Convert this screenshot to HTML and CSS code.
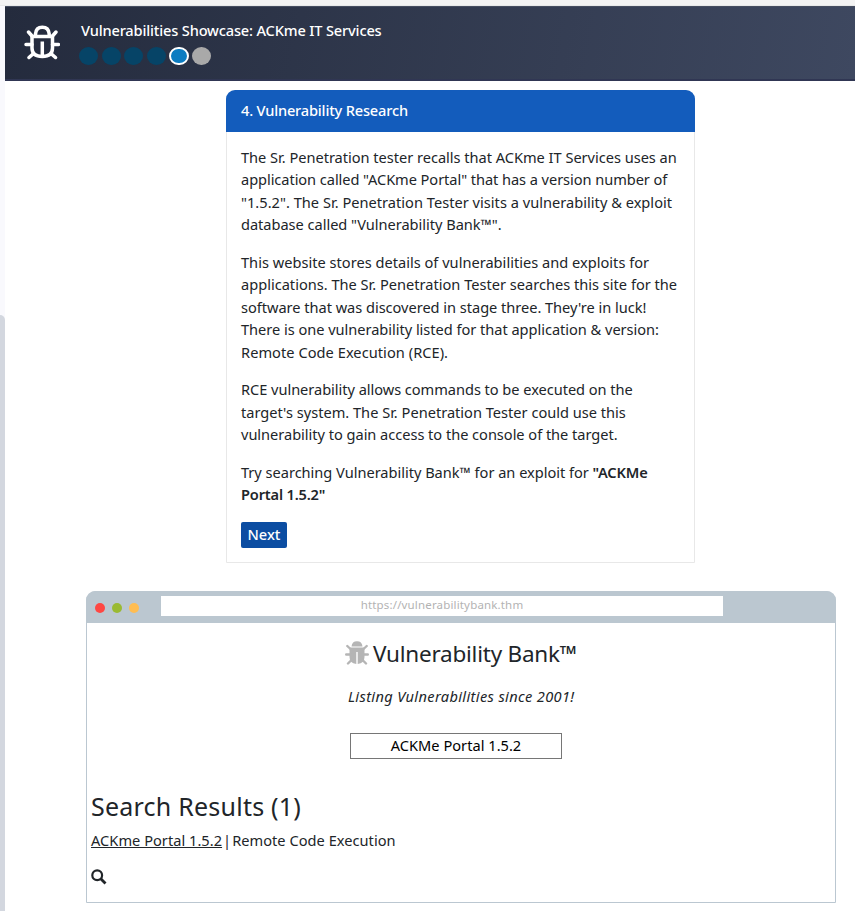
FILE: index.html
```html
<!DOCTYPE html>
<html lang="en">
<head>
<meta charset="utf-8">
<title>Vulnerabilities Showcase</title>
<link rel="stylesheet" href="styles.css">
</head>
<body>
<aside class="rail"><div class="thumb"></div></aside>
<div class="page">
  <header class="top">
    <svg class="logo" viewBox="0 0 36 36" fill="none" stroke="#fff" stroke-width="3.500" stroke-linecap="round" stroke-linejoin="round">
      <path d="M8 12.500H28.500V24Q28.500 32.500 18.300 32.500Q8 32.500 8 24Z"/>
      <path d="M11.500 12V10Q12 3.200 18.300 3.200Q24.700 3.200 25.200 10V12"/>
      <path stroke-linecap="butt" d="M18.300 17.500V32"/>
      <path d="M4.500 8L8 12M32 8L28.500 12M2 20.500H8M28.500 20.500H34.500M9 30L5 33.500M27.500 30L31.500 33.500"/>
    </svg>
    <div>
      <h1 class="title">Vulnerabilities Showcase: ACKme IT Services</h1>
      <div class="steps"><i></i><i></i><i></i><i></i><i class="current"></i><i class="todo"></i></div>
    </div>
  </header>
  <section class="card">
    <h2 class="card-head"><span>4. Vulnerability Research</span></h2>
    <div class="card-body">
      <p><span class="l1">The Sr. Penetration tester recalls that ACKme IT Services uses an</span><br><span class="l2">application called "ACKme Portal" that has a version number of</span><br><span class="l3">"1.5.2". The Sr. Penetration Tester visits a vulnerability &amp; exploit</span><br><span class="l4">database called "Vulnerability Bank™".</span></p>
      <p><span class="l5">This website stores details of vulnerabilities and exploits for</span><br><span class="l6">applications. The Sr. Penetration Tester searches this site for the</span><br><span class="l7">software that was discovered in stage three. They're in luck!</span><br><span class="l8">There is one vulnerability listed for that application &amp; version:</span><br><span class="l9">Remote Code Execution (RCE).</span></p>
      <p><span class="l10">RCE vulnerability allows commands to be executed on the</span><br><span class="l11">target's system. The Sr. Penetration Tester could use this</span><br><span class="l12">vulnerability to gain access to the console of the target.</span></p>
      <p><span class="l13">Try searching Vulnerability Bank™ for an exploit for</span> <b>"ACKMe</b><br><b>Portal 1.5.2"</b></p>
      <button class="next">Next</button>
    </div>
  </section>
  <section class="browser">
    <div class="bar">
      <div class="dots"><i class="red"></i><i class="green"></i><i class="amber"></i></div>
      <div class="url"><span>https://vulnerabilitybank.thm</span></div>
    </div>
    <div class="site">
      <h2 class="brand">
        <svg class="bug" viewBox="0 0 24 24" fill="#b5b5b5" stroke="#b5b5b5" stroke-linecap="round">
          <path stroke="none" d="M6.500 5.500Q7 .3 12 .3T17.500 5.500ZM4.500 6.500H19.500V16Q19.500 22 12.700 23V11H11.300V23Q4.500 22 4.500 16Z"/>
          <path stroke-width="2.400" d="M2.300 5L6 8.500M21.700 5L18 8.500M1.200 13.500H6M18 13.500H22.800M6.500 19L3 22.500M17.500 19L21 22.500"/>
        </svg>
        <span>Vulnerability Bank™</span>
      </h2>
      <p class="tag"><span>Listing Vulnerabilities since 2001!</span></p>
      <div class="field"><span>ACKMe Portal 1.5.2</span></div>
      <h3 class="results"><span>Search Results (1)</span></h3>
      <p class="result"><u>ACKme Portal 1.5.2</u><span class="sep">|</span><span>Remote Code Execution</span></p>
      <svg class="search" viewBox="0 0 16 16" fill="none" stroke="#212529"><circle cx="6.200" cy="6.200" r="4.900" stroke-width="2.200"/><path d="M10 10L14.500 14.500" stroke-width="2.800"/></svg>
    </div>
  </section>
</div>
</body>
</html>
```
FILE: styles.css
```css
* { box-sizing: border-box; }
body { margin: 0; height: 911px; overflow: hidden; display: flex; padding-top: 6px; background: linear-gradient(#f3f3f3 0 5px, #e8e9e9 5px 6px, #fff 6px); font: 14.6px/22.5px "Noto Sans", sans-serif; color: #212529; }
h1, h2, h3, p { margin: 0; font-weight: 400; white-space: nowrap; }
.rail { width: 5px; flex: none; background: #f9f9fd; padding-top: 309px; }
.thumb { height: 596px; background: #d3d7df; border-top-right-radius: 5px; }
.page { width: 850px; flex: none; }
.top { height: 75px; display: flex; padding: 12px 0 0 19px; background: linear-gradient(100deg, #242b3d, #3e4860); border-top: 1px solid #454d60; border-bottom: 2px solid #303653; color: #fff; }
.logo { width: 36px; height: 36px; margin: 5px 19px 0 0; }
.title { font-size: 14.6px; line-height: 22px; font-weight: 500; margin-left: 2px; letter-spacing: -.16px; }
.steps { display: flex; gap: 3.400px; margin: 5.500px 0 0 0; }
.steps i { width: 19.200px; height: 18.500px; border-radius: 50%; background: #064467; }
.steps .current { background: #0c7cc1; border: 2px solid #fff; }
.steps .todo { background: #a9a9a9; }
.card { width: 469px; height: 473px; margin: 9px 0 0 221px; border: 1px solid #e8e8e8; border-radius: 10px 10px 0 0; }
.card-head { height: 42px; margin: -1px -1px 0; padding: 9px 15px; border-radius: 9px 9px 0 0; background: #135cbc; color: #fff; font-size: 14.6px; line-height: 23px; font-weight: 500; letter-spacing: -.18px; }
.card-body { padding: 13.600px 14px; }
.card-body p { margin-bottom: 15px; letter-spacing: -.03px; }
.card-body b { font-weight: 600; letter-spacing: -.17px; }
.l1 { letter-spacing: -.02px; }
.l2 { letter-spacing: -.06px; }
.l3 { letter-spacing: .02px; }
.l5 { letter-spacing: .01px; }
.l6 { letter-spacing: 0; }
.l9 { letter-spacing: .05px; }
.l10 { letter-spacing: -.04px; }
.l11 { letter-spacing: 0; }
.l13 { letter-spacing: -.02px; }
.next { display: block; width: 46px; height: 26px; margin-top: 16.400px; border: 0; border-radius: 2px; padding: 0 0 1px; background: #0b4da2; color: #fff; font: 500 14.6px/24px "Noto Sans", sans-serif; }
.browser { width: 750px; height: 312px; margin: 28px 0 0 81px; border: 1px solid #bbc7d1; border-radius: 10px 10px 0 0; }
.bar { height: 32px; margin: -1px -1px 0; padding: 5px 0 0 9px; border-radius: 9px 9px 0 0; background: #bbc7d0; display: flex; }
.dots { display: flex; gap: 7px; width: 66px; padding-top: 7px; }
.dots i { width: 10px; height: 10px; border-radius: 50%; }
.red { background: #ff4743; }
.green { background: #9aba32; }
.amber { background: #ffbd52; }
.url { width: 562px; height: 20px; background: #fff; color: #b3b3b3; font-size: 11.500px; line-height: 18px; text-align: center; letter-spacing: .16px; }
.site { padding: 15px 4px 0; }
.brand { display: flex; padding-left: 254px; font-size: 22.500px; line-height: 31px; letter-spacing: -.23px; }
.bug { width: 24px; height: 24px; margin: 3px 4px 0 0; }
.tag { margin-top: 16px; padding-left: 257px; font-style: italic; letter-spacing: .36px; }
.field { width: 212px; height: 26px; margin: 25px 0 0 259px; border: 1px solid #767676; color: #000; line-height: 23px; text-align: center; white-space: nowrap; letter-spacing: .02px; }
.results { margin-top: 31px; font-size: 25px; line-height: 32px; letter-spacing: .23px; }
.result { margin-top: 7px; letter-spacing: .03px; }
.result .sep { margin: 0 1px; }
.search { display: block; width: 16px; height: 16px; margin-top: 18px; }
```
